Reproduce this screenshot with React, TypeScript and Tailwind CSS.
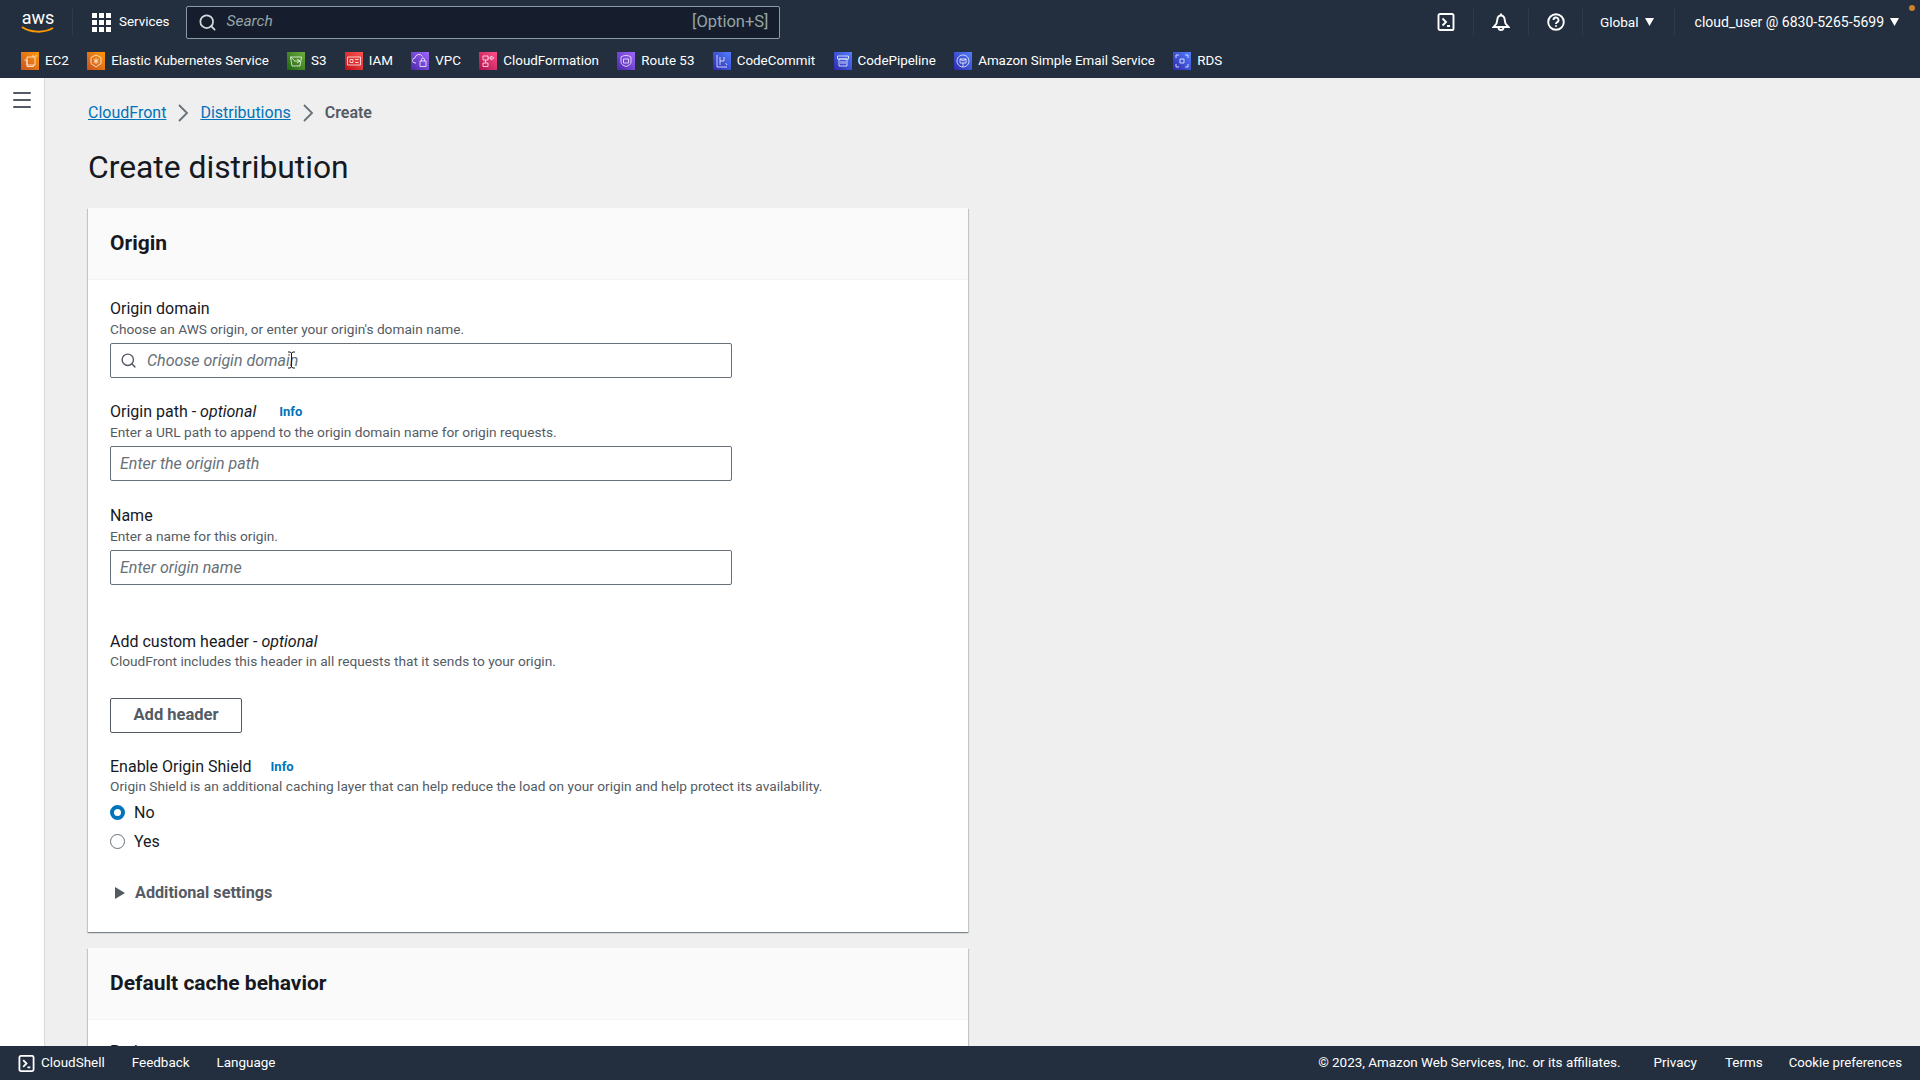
import { Menu, Search } from "lucide-react";
import type { ReactNode } from "react";

const FONT = "font-['Roboto','Liberation_Sans',sans-serif]";
const CARD_SHADOW = "shadow-[0_1px_1px_0_rgba(0,28,36,0.3),1px_1px_1px_0_rgba(0,28,36,0.15),-1px_1px_1px_0_rgba(0,28,36,0.15)]";

type Shortcut = { name: string; color: string; glyph: ReactNode };

const shortcuts: Shortcut[] = [
  {
    name: "EC2",
    color: "from-[#c8511b] to-[#ff9900]",
    glyph: <path d="M6 5h8v8H6zM3.500 8H6v6.500h6.500V13M15 3v2M12 3v2" />,
  },
  {
    name: "Elastic Kubernetes Service",
    color: "from-[#c8511b] to-[#ff9900]",
    glyph: <path d="M9 3l5 2.500v6L9 15l-5-3.500v-6zM9 6v6M6.500 7.500l5 3M11.500 7.500l-5 3" />,
  },
  {
    name: "S3",
    color: "from-[#1b660f] to-[#6cae3e]",
    glyph: <path d="M3.500 5h11l-1.500 9H5zM3.500 5l4 3.500M7 9h6M10 7l3 2-3 2" />,
  },
  {
    name: "IAM",
    color: "from-[#bd0816] to-[#ff5252]",
    glyph: <path d="M2.500 5h13v8h-13zM5 7.500h3v3H5zM10 7.500h3.500M10 10.500h3.500" />,
  },
  {
    name: "VPC",
    color: "from-[#4d27a8] to-[#a166ff]",
    glyph: <path d="M5 11H4a2.500 2.500 0 0 1 0-5 4 4 0 0 1 7.500-1.500M9 9h6v5.500H9zM10.500 9V7.500a1.500 1.500 0 0 1 3 0V9" />,
  },
  {
    name: "CloudFormation",
    color: "from-[#b0084d] to-[#ff4f8b]",
    glyph: <path d="M4 4h5v4H4zM4 11h5v3.500H4zM6.500 8v3M9 6h3M12 4v4l3-2z" />,
  },
  {
    name: "Route 53",
    color: "from-[#4d27a8] to-[#a166ff]",
    glyph: <path d="M4 5c3-2 7-2 10 0v5c0 2-2 3.500-5 4.500C6 13.500 4 12 4 10zM6.500 7h5v4h-5z" />,
  },
  {
    name: "CodeCommit",
    color: "from-[#2e27ad] to-[#527fff]",
    glyph: <path d="M4 3v12h10M7 5v8M7 9h4M11 5v4M12.500 11l1.500 2" />,
  },
  {
    name: "CodePipeline",
    color: "from-[#2e27ad] to-[#527fff]",
    glyph: <path d="M3.500 4h11v3h-11zM5 7h8v7H5zM7 9v3M9 9v3M11 9v3" />,
  },
  {
    name: "Amazon Simple Email Service",
    color: "from-[#2e27ad] to-[#527fff]",
    glyph: <path d="M9 3a6 6 0 1 1-.01 0M6 7h6v4H6zM6 7l3 2 3-2M9 11v4" />,
  },
  {
    name: "RDS",
    color: "from-[#2e27ad] to-[#527fff]",
    glyph: <path d="M3 3h3M3 3v3M15 3h-3M15 3v3M3 15h3M3 15v-3M15 15h-3M15 15v-3M7 7h4v4H7z" />,
  },
];

const ShellIcon = ({ size = 18 }: { size?: number }) => (
  <svg width={size} height={size} viewBox="0 0 18 18" fill="none" stroke="white" strokeWidth="1.9">
    <rect x="1.500" y="1" width="15" height="16" rx="1.600" />
    <path d="M5.500 5.500 9 9l-3.500 3.500M10 13h3" />
  </svg>
);

const ServiceGlyph = ({ shortcut }: { shortcut: Shortcut }) => (
  <span className={`flex h-[18px] w-[18px] shrink-0 items-center justify-center bg-linear-to-tr ${shortcut.color}`}>
    <svg width="18" height="18" viewBox="0 0 18 18" fill="none" stroke="white" strokeOpacity="0.75" strokeWidth="1">
      {shortcut.glyph}
    </svg>
  </span>
);

const Caret = () => (
  <svg width="9" height="8" viewBox="0 0 9 8" className="shrink-0">
    <path d="M0 0h9L4.500 8z" fill="white" />
  </svg>
);

const Divider = () => <span className="block h-[26px] w-px bg-[#2f3b4a]" />;

const TopNav = () => (
  <header className="relative shrink-0 bg-[#232f3e] text-white">
    <span className="absolute top-[5px] right-[5px] h-[6px] w-[6px] rounded-full bg-[#c9812c]" />
    <div className="flex h-[44px] items-center">
      <div className="ml-[20px] flex w-[36px] flex-col items-center">
        <span className="text-[18px] leading-[16px]">aws</span>
        <svg width="34" height="8" viewBox="0 0 34 8" fill="none">
          <path d="M1 1c9 6 22 6 31 1" stroke="#ff9900" strokeWidth="2" />
        </svg>
      </div>
      <span className="ml-[16px] mr-[19px] h-[26px] w-px bg-[#2f3b4a]" />
      <span className="grid grid-cols-3 gap-[2px]">
        {Array.from({ length: 9 }).map((_, i) => (
          <span key={i} className="h-[5px] w-[5px] bg-white" />
        ))}
      </span>
      <span className="ml-[8px] text-[13.4px]">Services</span>
      <div className="ml-[17px] flex h-[33px] w-[594px] items-center rounded-[2px] border border-[#8d99a8] bg-[#161e2d] pr-[11px] pl-[11px]">
        <Search size={19} strokeWidth={2.2} className="text-[#d5dbdb]" />
        <span className="ml-[9px] text-[15.5px] text-[#95a5a6] italic">Search</span>
        <span className="ml-auto text-[16.500px] text-[#95a5a6]">[Option+S]</span>
      </div>
      <div className="ml-auto flex items-center">
        <ShellIcon />
        <span className="mx-[18px]"><Divider /></span>
        <svg width="18" height="18" viewBox="0 0 18 18" fill="none" stroke="white" strokeWidth="1.900">
          <path d="M1.500 14 4.500 10.500 5.500 6a3.500 3.500 0 0 1 7 0l1 4.500 3 3.500zM9 .500v2M6.500 14.500a2.500 2.500 0 0 0 5 0" />
        </svg>
        <span className="mx-[18px]"><Divider /></span>
        <svg width="18" height="18" viewBox="0 0 18 18" fill="none" stroke="white" strokeWidth="1.900">
          <circle cx="9" cy="9" r="7.800" />
          <path d="M6.500 7a2.500 2.500 0 1 1 3.500 2.300c-.7.3-1 .8-1 1.700M9 12.300v1.500" />
        </svg>
        <span className="mx-[17px]"><Divider /></span>
        <span className="text-[13.6px]">Global</span>
        <span className="ml-[6px]"><Caret /></span>
        <span className="mx-[20px]"><Divider /></span>
        <span className="text-[14px]">cloud_user @ 6830-5265-5699</span>
        <span className="ml-[6px] mr-[21px]"><Caret /></span>
      </div>
    </div>
    <nav className="flex h-[34px] items-center gap-[18.3px] pl-[21px]">
      {shortcuts.map((s) => (
        <span key={s.name} className="flex items-center gap-[6px] text-[13.4px] whitespace-nowrap">
          <ServiceGlyph shortcut={s} />
          {s.name}
        </span>
      ))}
    </nav>
  </header>
);

const Crumb = ({ children }: { children: string }) => (
  <a className="text-[16px] text-[#0073bb] underline">{children}</a>
);

const CrumbArrow = () => (
  <svg width="12" height="20" viewBox="0 0 12 20" fill="none" className="mx-[11px]">
    <path d="M2 2l8 8-8 8" stroke="#687078" strokeWidth="1.800" />
  </svg>
);

// I-beam mouse pointer that sits over the origin domain input in the capture
const TextCursor = () => (
  <svg width="9" height="18" viewBox="0 0 9 18" fill="none" className="absolute top-[7px] left-[176px]">
    <path d="M1 1h2l1.500 1L6 1h2M4.500 2v14M1 17h2l1.500-1L6 17h2" stroke="#16191f" strokeWidth="1" />
  </svg>
);

const Field = ({
  label,
  optional,
  info,
  hint,
  placeholder,
  search,
}: {
  label: string;
  optional?: boolean;
  info?: boolean;
  hint: string;
  placeholder: string;
  search?: boolean;
}) => (
  <div>
    <div className="flex h-[20px] items-center text-[16px] text-[#16191f]">
      <span>
        {label}
        {optional && (
          <>
            {" - "}
            <i className="pr-[3px]">optional</i>
          </>
        )}
      </span>
      {info && <span className="ml-[20px] text-[13px] font-bold text-[#0073bb]">Info</span>}
    </div>
    <p className="mt-[1px] h-[18px] text-[13.7px] leading-[18px] text-[#545b64]">{hint}</p>
    <div className="relative mt-[5px] flex h-[35px] w-[622px] items-center rounded-[2px] border border-[#687078] bg-white px-[9px]">
      {search && <Search size={17} strokeWidth={2} className="mr-[10px] text-[#545b64]" />}
      <span className="text-[16px] text-[#687078] italic">{placeholder}</span>
      {search && <TextCursor />}
    </div>
  </div>
);

const Radio = ({ label, checked }: { label: string; checked?: boolean }) => (
  <div className="flex h-[29px] items-center text-[16px] text-[#16191f]">
    <span
      className={
        checked
          ? "h-[15px] w-[15px] rounded-full border-[4px] border-[#0073bb] bg-white"
          : "h-[15px] w-[15px] rounded-full border border-[#687078] bg-white"
      }
    />
    <span className="ml-[9px]">{label}</span>
  </div>
);

const CardHeader = ({ title }: { title: string }) => (
  <div className="flex h-[72px] items-center border-b border-[#f2f3f3] bg-[#fafafa] px-[22px] text-[21px] font-bold text-[#16191f]">
    {title}
  </div>
);

export default function App() {
  return (
    <div className={`${FONT} flex h-screen flex-col overflow-hidden bg-[#efefef]`}>
      <TopNav />
      <div className="flex min-h-0 flex-1">
        <aside className="w-[45px] shrink-0 border-r border-[#d5dbdb] bg-white pt-[10px] pl-[10px]">
          <Menu size={24} strokeWidth={2} className="text-[#545b64]" />
        </aside>
        <main className="min-w-0 flex-1 overflow-hidden pl-[43px]">
          <div className="mt-[24px] flex h-[22px] items-center">
            <Crumb>CloudFront</Crumb>
            <CrumbArrow />
            <Crumb>Distributions</Crumb>
            <CrumbArrow />
            <span className="text-[16px] font-semibold text-[#545b64]">Create</span>
          </div>
          <h1 className="mt-[21px] h-[44px] text-[31.8px] leading-[44px] font-normal text-[#16191f]">Create distribution</h1>
          <section className={`mt-[19px] w-[880px] bg-white ${CARD_SHADOW}`}>
            <CardHeader title="Origin" />
            <div className="px-[22px] pt-[19px] pb-[29px]">
              <Field label="Origin domain" hint="Choose an AWS origin, or enter your origin's domain name." placeholder="Choose origin domain" search />
              <div className="mt-[24px]">
                <Field label="Origin path" optional info hint="Enter a URL path to append to the origin domain name for origin requests." placeholder="Enter the origin path" />
              </div>
              <div className="mt-[25px]">
                <Field label="Name" hint="Enter a name for this origin." placeholder="Enter origin name" />
              </div>
              <div className="mt-[47px] flex h-[20px] items-center text-[16px] text-[#16191f]">
                <span>
                  Add custom header - <i>optional</i>
                </span>
              </div>
              <p className="h-[18px] text-[13.7px] leading-[18px] text-[#545b64]">
                CloudFront includes this header in all requests that it sends to your origin.
              </p>
              <button className="mt-[28px] block h-[35px] w-[132px] rounded-[2px] border border-[#545b64] bg-white text-[16.500px] font-bold text-[#545b64]">
                Add header
              </button>
              <div className="mt-[24px] flex h-[20px] items-center text-[16px] text-[#16191f]">
                Enable Origin Shield
                <span className="ml-[19px] text-[13px] font-bold text-[#0073bb]">Info</span>
              </div>
              <p className="h-[18px] text-[13.7px] leading-[18px] text-[#545b64]">
                Origin Shield is an additional caching layer that can help reduce the load on your origin and help protect its availability.
              </p>
              <div className="mt-[3px]">
                <Radio label="No" checked />
                <Radio label="Yes" />
              </div>
              <div className="mt-[27px] flex h-[20px] items-center text-[16.2px] font-bold text-[#545b64]">
                <svg width="10" height="12" viewBox="0 0 10 12" className="ml-[5px] mr-[10px]">
                  <path d="M0 0l10 6-10 6z" fill="#545b64" />
                </svg>
                Additional settings
              </div>
            </div>
          </section>
          <section className={`mt-[16px] w-[880px] bg-white ${CARD_SHADOW}`}>
            <CardHeader title="Default cache behavior" />
            <div className="px-[22px] pt-[20px] text-[16px] text-[#16191f]">Path pattern</div>
          </section>
        </main>
      </div>
      <footer className="flex h-[34px] shrink-0 items-center bg-[#232f3e] px-[18px] text-[13.45px] text-white">
        <ShellIcon size={17} />
        <span className="ml-[6px]">CloudShell</span>
        <span className="ml-[27px]">Feedback</span>
        <span className="ml-[27px]">Language</span>
        <span className="ml-auto">© 2023, Amazon Web Services, Inc. or its affiliates.</span>
        <span className="ml-[33px]">Privacy</span>
        <span className="ml-[28px]">Terms</span>
        <span className="ml-[26px] text-[13.2px]">Cookie preferences</span>
      </footer>
    </div>
  );
}
